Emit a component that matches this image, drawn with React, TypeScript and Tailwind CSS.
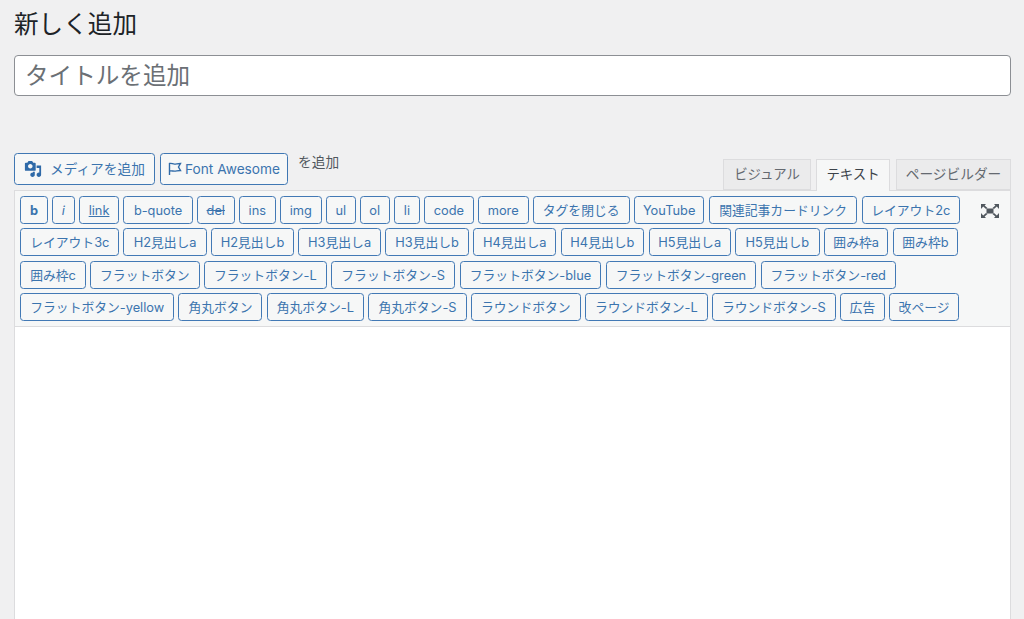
import React from "react";

const rows: [string, string][][] = [
  [
    ["b", "w-[27.4px]"], ["i", "w-[22.7px]"], ["link", "w-[40.2px]"], ["b-quote", "w-[69.2px]"],
    ["del", "w-[37.7px]"], ["ins", "w-[36.7px]"], ["img", "w-[41.7px]"], ["ul", "w-[29.7px]"],
    ["ol", "w-[29.7px]"], ["li", "w-[26.2px]"], ["code", "w-[49.2px]"], ["more", "w-[50.7px]"],
    ["タグを閉じる", "w-[96.7px]"], ["YouTube", "w-[70.7px]"], ["関連記事カードリンク", "w-[148.7px]"], ["レイアウト2c", "w-[98px]"],
  ],
  [
    ["レイアウト3c", "w-[98.9px]"], ["H2見出しa", "w-[83.2px]"], ["H2見出しb", "w-[83px]"], ["H3見出しa", "w-[82.7px]"],
    ["H3見出しb", "w-[83.7px]"], ["H4見出しa", "w-[83px]"], ["H4見出しb", "w-[83.7px]"], ["H5見出しa", "w-[82.3px]"],
    ["H5見出しb", "w-[84.4px]"], ["囲み枠a", "w-[64.7px]"], ["囲み枠b", "w-[65.3px]"],
  ],
  [
    ["囲み枠c", "w-[65.4px]"], ["フラットボタン", "w-[109.7px]"], ["フラットボタン-L", "w-[122.7px]"], ["フラットボタン-S", "w-[124.4px]"],
    ["フラットボタン-blue", "w-[141.7px]"], ["フラットボタン-green", "w-[150.7px]"], ["フラットボタン-red", "w-[135.3px]"],
  ],
  [
    ["フラットボタン-yellow", "w-[153.9px]"], ["角丸ボタン", "w-[83.9px]"], ["角丸ボタン-L", "w-[97.3px]"], ["角丸ボタン-S", "w-[98.4px]"],
    ["ラウンドボタン", "w-[109.7px]"], ["ラウンドボタン-L", "w-[122.7px]"], ["ラウンドボタン-S", "w-[123.7px]"], ["広告", "w-[45px]"], ["改ページ", "w-[69.7px]"],
  ],
];

function Qt({ t, w }: { t: string; w: string }) {
  const extra =
    t === "b" ? "font-bold" : t === "i" ? "italic" : t === "link" ? "underline" : t === "del" ? "line-through" : "";
  return (
    <button className={`h-[28px] ${w} shrink-0 rounded-[3.5px] border border-[#4279b5] bg-[#f6f7f7] pt-[1px] text-[#3b74ae] text-[12.8px] leading-[25px] whitespace-nowrap ${extra}`}>
      {t}
    </button>
  );
}

export default function App() {
  return (
    <div
      className="h-[619px] w-[1024px] overflow-hidden bg-[#f0f0f1] pl-[14px] pr-[13px] text-[#1d2327]"
      style={{ fontFamily: "Inter, 'Noto Sans CJK JP', sans-serif" }}
    >
      <h1 className="pt-[9px] text-[24.6px] leading-[30px] font-normal">新しく追加</h1>
      <div className="mt-[16px] flex h-[41px] items-center rounded-[4px] border border-[#8c8f94] bg-white pl-[10px] pt-[1px] text-[23.6px] text-[#6b7075]">
        タイトルを追加
      </div>
      <div className="mt-[57px] flex h-[37px] items-start">
        <button className="flex h-[32px] w-[141px] items-center rounded-[3.5px] border border-[#3f77b3] bg-[#f6f7f7] pl-[9px] text-[13.7px] text-[#3b74ae]">
          <svg width="18" height="18" viewBox="0 0 20 20" fill="#2f6aa8" className="mr-[8px]">
            <path d="M13 11V4c0-.55-.45-1-1-1h-1.67L9 1H5L3.67 3H2c-.55 0-1 .45-1 1v7c0 .55.45 1 1 1h10c.55 0 1-.45 1-1zM7 4.5c1.38 0 2.5 1.12 2.5 2.5S8.38 9.5 7 9.5 4.5 8.38 4.5 7 5.62 4.5 7 4.5zM14 6h5v10.5c0 1.38-1.12 2.5-2.5 2.5S14 17.88 14 16.5s1.12-2.5 2.5-2.5c.17 0 .34.02.5.05V9h-3V6zm-4 8.05V13h2v3.5c0 1.38-1.12 2.5-2.5 2.5S7 17.88 7 16.5 8.12 14 9.5 14c.17 0 .34.02.5.05z" />
          </svg>
          メディアを追加
        </button>
        <button className="ml-[5px] flex h-[32px] w-[128px] items-center rounded-[3.5px] border border-[#3f77b3] bg-[#f6f7f7] pl-[7px] text-[13.7px] text-[#3b74ae]">
          <svg width="14" height="14" viewBox="0 0 14 14" fill="none" stroke="#2f6aa8" strokeWidth="1.4" className="mr-[3px]">
            <path d="M1.5 13V1.5c2 -.6 3 .6 5 .6s3-.6 6-.6L10.5 5l2 3.5c-3 0-4 .6-6 .6s-3-.6-5-.1" />
          </svg>
          Font Awesome
        </button>
        <span className="ml-[10px] text-[13.7px] leading-[18px] text-[#50575e]">を追加</span>
        <div className="ml-auto mt-[6px] flex h-[31px] items-start relative z-10">
          <div className="mr-[5px] h-[31px] w-[88px] border border-[#dcdcde] bg-[#ebebec] text-center text-[13.4px] leading-[28px] text-[#646970]">ビジュアル</div>
          <div className="mr-[6px] h-[32px] w-[74px] border border-b-0 border-[#dcdcde] bg-[#f6f7f7] text-center text-[13.4px] leading-[28px] text-[#3c434a]">テキスト</div>
          <div className="h-[31px] w-[115px] border border-[#dcdcde] bg-[#ebebec] text-center text-[13.7px] leading-[28px] text-[#646970]">ページビルダー</div>
        </div>
      </div>
      <div className="relative flex h-[137px] flex-col gap-[4.3px] border border-[#dcdcde] bg-[#f6f7f7] pl-[5.3px] pt-[5px]">
        {rows.map((r, i) => (
          <div key={i} className="flex gap-[4.3px]">
            {r.map(([t, w]) => (
              <Qt key={t} t={t} w={w} />
            ))}
          </div>
        ))}
        <svg className="absolute left-[965px] top-[12px] text-[#50575e]" width="20" height="16" viewBox="0 0 20 16" fill="currentColor" stroke="none">
          <rect x="6.5" y="5.5" width="7" height="5" />
          <path d="M1 1h5L4.6 2.6 7.5 5 6 6 3.2 3.6 1 6zM19 1v5l-2.2-2.4L14 6l-1.5-1 2.9-2.4L14 1zM1 15v-5l2.2 2.4L6 10l1.5 1-2.9 2.4L6 15zM19 15h-5l1.4-1.6L12.5 11 14 10l2.8 2.4L19 10z" />
        </svg>
      </div>
      <div className="h-[300px] border-x border-[#dcdcde] bg-white" />
    </div>
  );
}
